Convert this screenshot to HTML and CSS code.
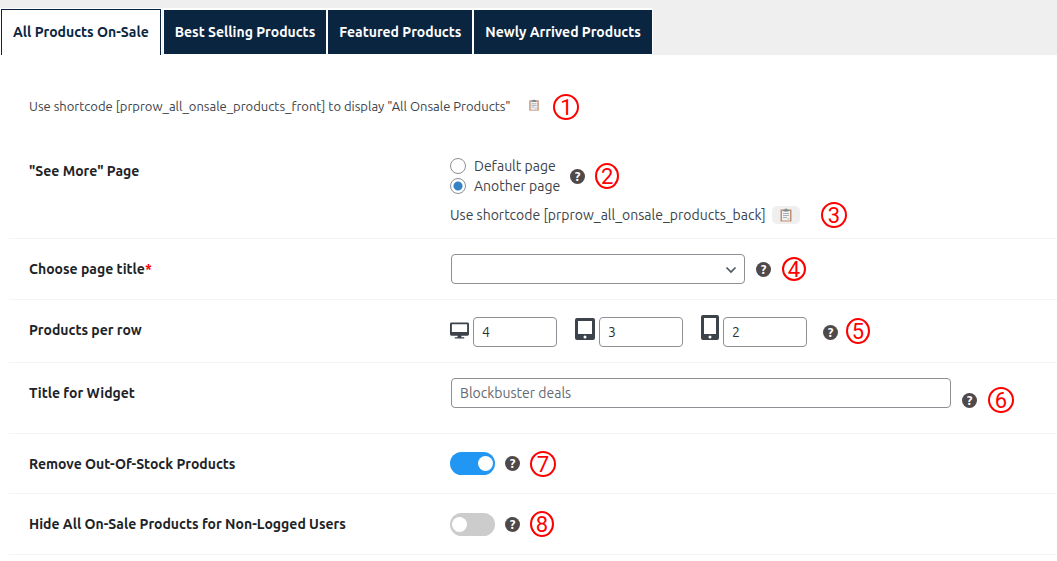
FILE: index.html
```
<!DOCTYPE html>
<html lang="en">
<head>
  <meta charset="UTF-8">
  <meta name="viewport" content="width=device-width, initial-scale=1.0">
  <title>All Products On-Sale</title>
  <link rel="stylesheet" href="styles.css">
</head>
<body>
<svg class="sprite" aria-hidden="true">
  <symbol id="clipboard" viewBox="0 0 14 14">
    <path d="M1.500 1.500h11v12h-11z" fill="#c08e70"/>
    <path d="M3 3h8v9.500H3z" fill="#f1f3f4"/>
    <path d="M4.500 3.500V1.500H6a1 1 0 0 1 2 0h1.500v2z" fill="#7c8a8c"/>
    <path d="M4 5.500h6M4 7.500h6M4 9.500h4" stroke="#a5afb5" fill="none"/>
    <path d="M8.500 12.500v-2.500H11z" fill="#c3cacd"/>
  </symbol>
</svg>

<nav class="tabs">
  <a href="#" class="tab active">All Products On-Sale</a>
  <a href="#" class="tab">Best Selling Products</a>
  <a href="#" class="tab">Featured Products</a>
  <a href="#" class="tab">Newly Arrived Products</a>
</nav>

<main class="settings">
  <div class="intro">
    <span class="hint">Use shortcode [prprow_all_onsale_products_front] to display "All Onsale Products"</span>
    <button type="button" class="copy plain" aria-label="Copy shortcode"><svg><use href="#clipboard"/></svg></button>
    <span class="num">1</span>
  </div>

  <div class="row see-more">
    <div class="label" id="see-more">"See More" Page</div>
    <div class="content">
      <div class="field">
        <div class="radios" role="radiogroup" aria-labelledby="see-more">
          <label><input type="radio" name="page">Default page</label>
          <label><input type="radio" name="page" checked>Another page</label>
        </div>
        <button type="button" class="help" aria-label="Help">?</button>
        <span class="num narrow">2</span>
      </div>
      <div class="shortcode">
        <span>Use shortcode [prprow_all_onsale_products_back]</span>
        <button type="button" class="copy" aria-label="Copy shortcode"><svg><use href="#clipboard"/></svg></button>
        <span class="num">3</span>
      </div>
    </div>
  </div>

  <div class="row">
    <label class="label" for="page-title">Choose page title<span class="required">*</span></label>
    <div class="field boxed">
      <div class="select-wrap">
        <select id="page-title"><option></option></select>
        <svg class="arrow" viewBox="0 0 12 8"><path d="M1.500 1.500 6 6l4.500-4.500" fill="none" stroke="#50575e" stroke-width="1.700"/></svg>
      </div>
      <button type="button" class="help" aria-label="Help">?</button>
      <span class="num small">4</span>
    </div>
  </div>

  <div class="row">
    <div class="label">Products per row</div>
    <div class="field devices">
      <label class="device">
        <svg class="desktop" viewBox="0 0 20 18" role="img" aria-label="Desktop"><path fill-rule="evenodd" d="M1.500 0h17A1.500 1.500 0 0 1 20 1.500v11a1.500 1.500 0 0 1-1.500 1.500H12v1.500h3V17H5v-1.500h3V14H1.500A1.500 1.500 0 0 1 0 12.500v-11A1.500 1.500 0 0 1 1.500 0zM2 2v8h16V2z"/></svg>
        <input type="text" value="4">
      </label>
      <label class="device">
        <svg class="tablet" viewBox="0 0 20 22" role="img" aria-label="Tablet"><path fill-rule="evenodd" d="M2 0h16a2 2 0 0 1 2 2v18a2 2 0 0 1-2 2H2a2 2 0 0 1-2-2V2a2 2 0 0 1 2-2zM3 3v13h14V3zM10 17.500a1.500 1.500 0 1 0 0 3 1.500 1.500 0 0 0 0-3z"/></svg>
        <input type="text" value="3">
      </label>
      <label class="device">
        <svg class="phone" viewBox="0 0 18 25" role="img" aria-label="Phone"><path fill-rule="evenodd" d="M2 0h14a2 2 0 0 1 2 2v21a2 2 0 0 1-2 2H2a2 2 0 0 1-2-2V2a2 2 0 0 1 2-2zM3 3v16h12V3zM9 20.500a1.500 1.500 0 1 0 0 3 1.500 1.500 0 0 0 0-3z"/></svg>
        <input type="text" value="2">
      </label>
      <button type="button" class="help" aria-label="Help">?</button>
      <span class="num narrow">5</span>
    </div>
  </div>

  <div class="row">
    <label class="label" for="widget-title">Title for Widget</label>
    <div class="field boxed widget">
      <input type="text" id="widget-title" placeholder="Blockbuster deals">
      <div class="notes">
        <button type="button" class="help" aria-label="Help">?</button>
        <span class="num">6</span>
      </div>
    </div>
  </div>

  <div class="row">
    <label class="label" for="remove-stock">Remove Out-Of-Stock Products</label>
    <div class="field">
      <input type="checkbox" class="switch" id="remove-stock" checked>
      <button type="button" class="help" aria-label="Help">?</button>
      <span class="num">7</span>
    </div>
  </div>

  <div class="row last">
    <label class="label" for="hide-sale">Hide All On-Sale Products for Non-Logged Users</label>
    <div class="field">
      <input type="checkbox" class="switch" id="hide-sale">
      <button type="button" class="help" aria-label="Help">?</button>
      <span class="num narrow">8</span>
    </div>
  </div>
</main>
</body>
</html>
```
FILE: styles.css
```
* {
  box-sizing: border-box;
}
body {
  margin: 0;
  background: #fff;
  color: #3c434a;
  font-family: Ubuntu, "Noto Sans", sans-serif;
  font-size: 14px;
  line-height: 20px;
}
input, select, button {
  margin: 0;
  font: inherit;
}
.sprite {
  display: none;
}
.tabs {
  display: flex;
  gap: 2px;
  padding: 9px 0 0 1px;
  background: #efefef;
}
.tab {
  height: 46px;
  padding: 12px 11px;
  border: 1px solid #fff;
  border-width: 1px 0;
  background: #0a2540;
  box-shadow: 0 0 0 1px #fff;
  color: #fff;
  font-weight: bold;
  text-decoration: none;
  white-space: nowrap;
}
.tab.active {
  margin-right: 1px;
  border: 1px solid #0a2540;
  border-bottom: 0;
  background: #fff;
  color: #0a2540;
}
.settings {
  padding: 39px 0 0 9px;
}
.intro {
  display: flex;
  align-items: center;
  margin-bottom: 26px;
  padding-left: 20px;
  font-size: 13px;
}
.hint {
  padding-bottom: 3px;
}
.row {
  display: grid;
  grid-template-columns: 421px 1fr;
  padding: 15px 0 15px 20px;
  border-bottom: 1px solid #f3f3f8;
}
.see-more {
  padding-top: 10px;
  padding-bottom: 10px;
}
.label {
  padding-top: 5px;
  color: #1d2327;
  font-weight: bold;
}
.required {
  color: #f00;
}
.field {
  display: flex;
  align-items: center;
  gap: 10px;
  min-height: 29px;
}
.last .field {
  min-height: 30px;
}
.boxed {
  gap: 11px;
  padding-left: 1px;
}
.radios label {
  display: flex;
  align-items: center;
  gap: 8px;
}
.radios input {
  appearance: none;
  width: 16px;
  height: 16px;
  border: 1px solid #8c8f94;
  border-radius: 50%;
  background: #fff;
}
.radios input:checked {
  background: radial-gradient(circle, #3582c4 4px, #fff 5px);
}
.shortcode {
  display: flex;
  align-items: center;
  margin-top: 6px;
}
.copy {
  display: flex;
  justify-content: center;
  align-items: center;
  width: 28px;
  height: 18px;
  margin: 0 21px 0 6px;
  padding: 0;
  border: 0;
  border-radius: 5px;
  background: #efefef;
}
.copy svg {
  width: 14px;
  height: 14px;
}
.copy.plain {
  width: 12px;
  margin: 0 13px 4px 18px;
  background: none;
}
.help {
  flex: none;
  width: 15px;
  height: 15px;
  padding: 0;
  border: 0;
  border-radius: 50%;
  background: #50494a;
  color: #fff;
  font-size: 13px;
  font-weight: bold;
  line-height: 15px;
}
.num {
  flex: none;
  width: 26px;
  height: 26px;
  border: 2px solid #f00;
  border-radius: 50%;
  color: #f00;
  font-family: Roboto, sans-serif;
  font-size: 22px;
  line-height: 24px;
  text-align: center;
}
.num.narrow {
  width: 24px;
}
.num.small {
  width: 24px;
  height: 24px;
  line-height: 22px;
}
select, input[type="text"] {
  height: 30px;
  border: 1px solid #8c8f94;
  border-radius: 4px;
  background: #fff;
  color: #2c3338;
}
.select-wrap {
  position: relative;
  width: 294px;
}
.select-wrap select {
  display: block;
  appearance: none;
  width: 100%;
  padding: 0 24px 0 8px;
}
.arrow {
  position: absolute;
  top: 12px;
  right: 8px;
  width: 12px;
  height: 8px;
  pointer-events: none;
}
.devices {
  align-items: flex-end;
  gap: 18px;
  min-height: 32px;
}
.device {
  display: flex;
  align-items: flex-end;
  gap: 4px;
}
.device svg {
  height: 25px;
  margin-bottom: 7px;
  fill: #3c434a;
}
.device .desktop {
  width: 19px;
  height: 18px;
}
.device .tablet {
  width: 20px;
  height: 22px;
}
.device .phone {
  width: 18px;
}
.device input {
  width: 84px;
  padding: 0 8px;
}
.devices .help {
  margin: 0 -10px 7px -2px;
}
.devices .num {
  margin-bottom: 3px;
}
.widget {
  align-items: flex-start;
}
.widget input {
  width: 500px;
  padding: 0 8px;
}
.widget input::placeholder {
  color: #646970;
}
.notes {
  display: flex;
  align-items: center;
  gap: 11px;
  padding: 9px 0 5px;
}
.switch {
  appearance: none;
  width: 45px;
  height: 23px;
  padding: 4px 2px;
  border-radius: 12px;
  background: #ccc;
}
.switch::before {
  content: "";
  display: block;
  width: 15px;
  height: 15px;
  border-radius: 50%;
  background: #fff;
}
.switch:checked {
  background: #2196f3;
}
.switch:checked::before {
  margin-left: auto;
}
```
